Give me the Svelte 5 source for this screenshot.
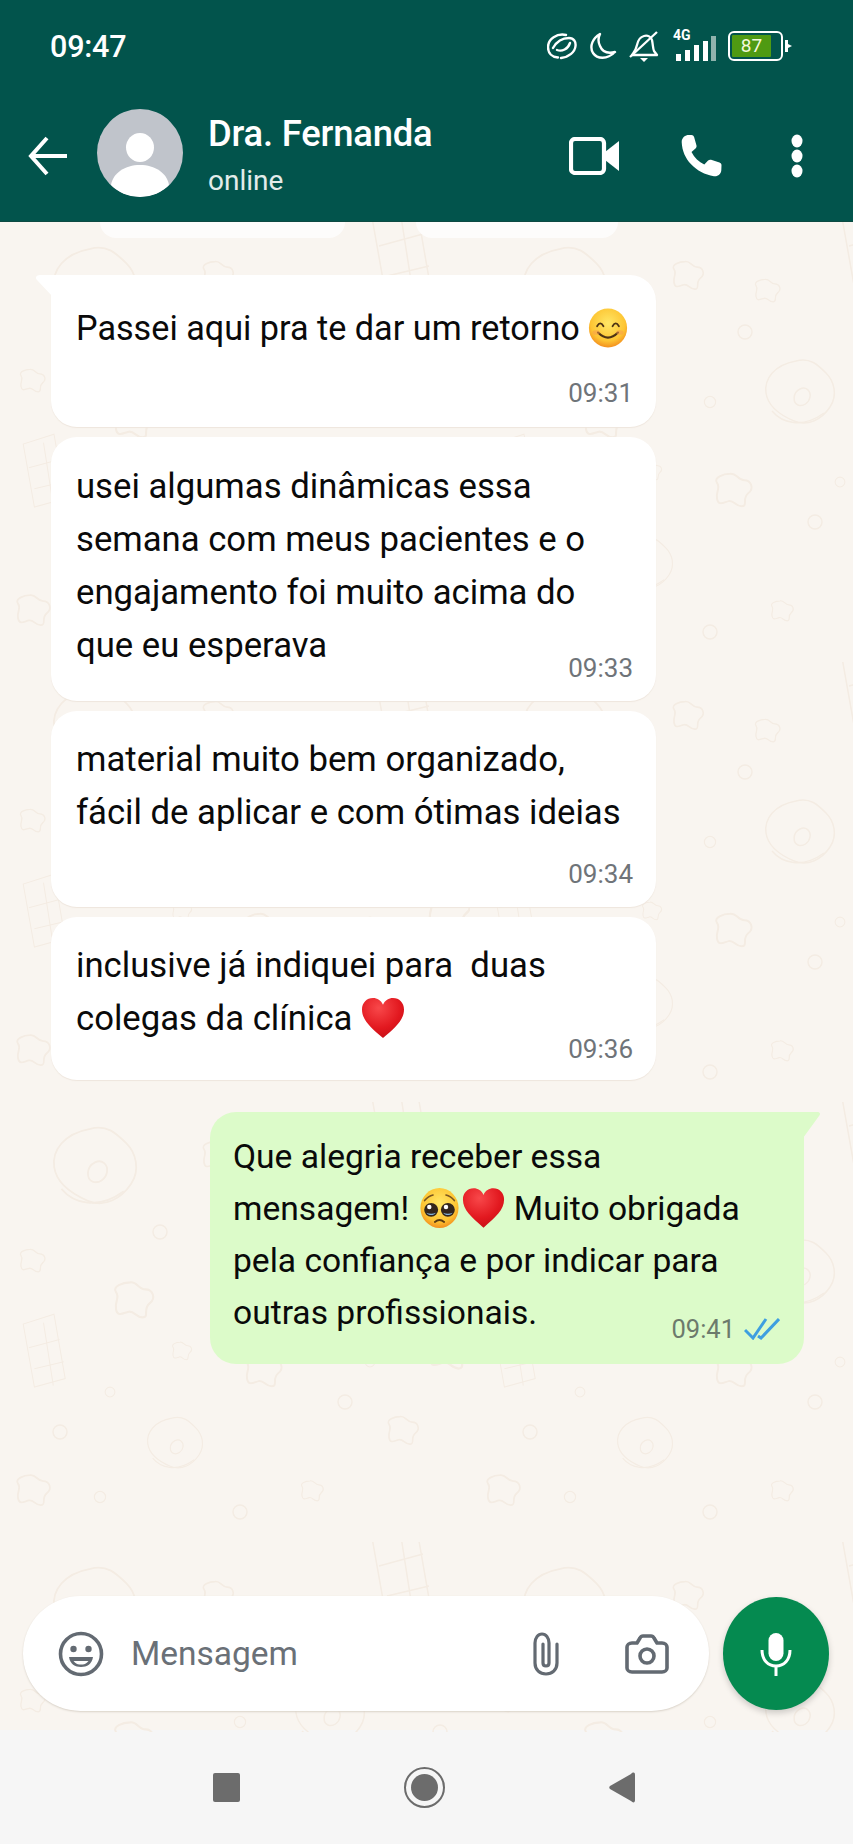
<script>
  // wallpaper tile, placed by hand so it stays faint and busy like the original
  const blob = 'M0-14c5-1 6 5 11 5s8 6 3 10 0 10-5 10-6-5-10-4-8 4-9-2 3-8 0-12 5-7 10-7z';
  const tile = [
    { kind: 'donut', x: 95, y: 70, s: 1.2 },
    { kind: 'donut', x: 330, y: 175, s: 1 },
    { kind: 'donut', x: 175, y: 345, s: 0.8 },
    { kind: 'grid', x: 395, y: 30, s: 1 },
    { kind: 'grid', x: 40, y: 250, s: 0.7 },
    { kind: 'star', x: 215, y: 55, s: 1.1 },
    { kind: 'star', x: 30, y: 160, s: 0.9 },
    { kind: 'star', x: 260, y: 270, s: 1.3 },
    { kind: 'star', x: 400, y: 330, s: 1.1 },
    { kind: 'star', x: 130, y: 200, s: 1.4 },
    { kind: 'star', x: 310, y: 390, s: 0.8 },
    { kind: 'star', x: 30, y: 390, s: 1.2 },
    { kind: 'star', x: 180, y: 250, s: 0.7 },
    { kind: 'star', x: 445, y: 250, s: 1.5 },
    { kind: 'star', x: 295, y: 70, s: 0.9 },
    { kind: 'dot', x: 160, y: 130, s: 1 },
    { kind: 'dot', x: 275, y: 110, s: 1 },
    { kind: 'dot', x: 240, y: 180, s: 0.8 },
    { kind: 'dot', x: 60, y: 330, s: 1 },
    { kind: 'dot', x: 345, y: 300, s: 1 },
    { kind: 'dot', x: 100, y: 395, s: 0.8 },
    { kind: 'dot', x: 440, y: 190, s: 1 },
    { kind: 'dot', x: 420, y: 120, s: 0.7 },
    { kind: 'dot', x: 240, y: 410, s: 1 },
    { kind: 'dot', x: 110, y: 290, s: 0.7 },
    { kind: 'dot', x: 370, y: 260, s: 0.7 }
  ];
</script>

<div class="phone">
  <header class="top">
    <div class="status">
      <span class="clock">09:47</span>
      <div class="status-icons">
        <svg width="30" height="27" viewBox="0 0 30 27" fill="none" stroke="#fff" stroke-width="2.400" stroke-linecap="round">
          <path d="M19 2C10 0 1 6 1 14c0 6 4 10 10 10.500" />
          <path d="M6 15c4-7 10-10 16-10 5 0 7 4 6.500 8-.5 6-6.500 11-14.500 12" />
          <path d="M10 17c5 2 11-1 13-7" />
        </svg>
        <svg width="28" height="28" viewBox="0 0 28 28" fill="none" stroke="#fff" stroke-width="2.400" stroke-linejoin="round">
          <path d="M11 2C4 6 0 14 4 21c4 6 14 7 22-1-8 2-13-1-15-6-2-4-2-8 0-12z" />
        </svg>
        <svg width="30" height="31" viewBox="0 0 30 31" fill="none" stroke="#fff" stroke-width="2.300" stroke-linejoin="round">
          <path d="M3 24c2-3 4-5 5-10 1-5 3-8 7-9 4-1 7 1 8 4 1 5 1 9 2 11l3 4z" />
          <path d="M1 26L28 1" />
          <path d="M11 27h8l-4 4z" fill="#fff" stroke="none" />
        </svg>
        <div class="signal">
          <span class="tag">4G</span>
          <svg width="40" height="25" viewBox="0 0 40 25" fill="#fff">
            <rect x="0" y="18" width="5" height="7" />
            <rect x="9" y="14" width="5" height="11" />
            <rect x="18" y="9" width="5" height="16" />
            <rect x="27" y="5" width="5" height="20" />
            <rect x="35" y="0" width="5" height="25" fill="#8fb3ad" />
          </svg>
        </div>
        <div class="battery">
          <div class="cell"><span class="level">87</span></div>
          <svg class="charge" width="7" height="14" viewBox="0 0 7 14" fill="#fff"><path d="M0 1h3v4l4 2-4 2v4H0z" /></svg>
        </div>
      </div>
    </div>
    <div class="appbar">
      <svg class="back" width="42" height="40" viewBox="0 0 42 40" fill="none" stroke="#fff" stroke-width="4">
        <path d="M41 20H6M21 2L5 20l16 18" />
      </svg>
      <div class="avatar">
        <svg width="86" height="88" viewBox="0 0 86 88">
          <ellipse cx="43" cy="38.500" rx="14" ry="14.500" fill="#fff" />
          <path d="M14 76c2-12 14-20 29-20s27 8 29 20c-7 8-18 12-29 12s-22-4-29-12z" fill="#fff" />
        </svg>
      </div>
      <div class="who">
        <div class="name">Dra. Fernanda</div>
        <div class="presence">online</div>
      </div>
      <div class="actions">
        <svg class="video" width="50" height="38" viewBox="0 0 50 38" fill="none" stroke="#fff" stroke-width="4.200" stroke-linejoin="round">
          <rect x="2" y="2" width="33" height="34" rx="4" />
          <path d="M36 15l14-11v30L36 23z" fill="#fff" stroke="none" />
        </svg>
        <svg class="call" width="43" height="42" viewBox="3 1.400 20 21" fill="#fff">
          <path d="M6.600 1.400c-1.600 0-3.600 1.300-3.500 3.600.2 4.200 1.800 8 4.700 11 3 3.200 6.800 5.200 11.400 6 2 .3 3.700-1.400 3.700-3l.1-2.500c0-.7-.4-1.200-1-1.400l-4.200-1.300c-.6-.2-1.100 0-1.500.4l-1.900 2c-2.700-1.300-5-3.500-6.400-6.300l2-1.800c.5-.4.600-1 .5-1.500L9.300 2.400c-.2-.6-.7-1-1.300-1z" />
        </svg>
        <svg width="12" height="44" viewBox="0 0 12 44" fill="#fff">
          <ellipse cx="6" cy="7" rx="5.500" ry="6.500" />
          <ellipse cx="6" cy="22" rx="5.500" ry="6.500" />
          <ellipse cx="6" cy="37" rx="5.500" ry="6.500" />
        </svg>
      </div>
    </div>
  </header>

  <main class="chat">
    <svg class="wallpaper" width="853" height="1510" aria-hidden="true">
      <defs>
        <pattern id="doodle" width="470" height="440" patternUnits="userSpaceOnUse">
          {#each tile as t}
            <g transform="translate({t.x} {t.y}) scale({t.s})" fill="none" stroke="#f4ece3" stroke-width="1.500">
              {#if t.kind === 'donut'}
                <path d="M-4-36c14-4 22 4 30 12s12 22 4 34-22 20-36 14-26-14-28-28 8-28 30-32z" />
                <path d="M0-8c6-3 11 2 10 8S3 10-2 8-8-4 0-8z" />
                <path d="M-28 14c10 12 30 18 52 2" />
              {:else if t.kind === 'grid'}
                <path d="M-24-40l16 90 44-12-16-92zM-16 -6l44-12M-8 24l42-10M5-42l14 90" />
              {:else if t.kind === 'star'}
                <path d={blob} />
              {:else}
                <circle r="7" />
              {/if}
            </g>
          {/each}
        </pattern>
      </defs>
      <rect width="853" height="1510" fill="url(#doodle)" />
    </svg>

    <div class="clipped">
      <span class="stub one"></span>
      <span class="stub two"></span>
    </div>

    <div class="thread">
      <div class="bubble in first">
        <svg class="tail" width="18" height="22" viewBox="0 0 18 22"><path d="M18 0H5C1 0 0 3 2 5l16 17z" fill="#fff" /></svg>
        <p class="text">Passei aqui pra te dar um retorno
          <svg class="emoji" width="40" height="42" viewBox="0 0 44 44">
            <defs>
              <radialGradient id="face" cx="50%" cy="38%" r="64%">
                <stop offset="0" stop-color="#ffe766" /><stop offset=".7" stop-color="#fdc533" /><stop offset="1" stop-color="#f2891c" />
              </radialGradient>
              <radialGradient id="red" cx="40%" cy="25%" r="85%">
                <stop offset="0" stop-color="#f8484a" /><stop offset=".6" stop-color="#e2181f" /><stop offset="1" stop-color="#c00c14" />
              </radialGradient>
            </defs>
            <ellipse cx="22" cy="22" rx="21" ry="21.500" fill="url(#face)" />
            <path d="M10 20q3.500-6 7 0M27 20q3.500-6 7 0" fill="none" stroke="#4d3314" stroke-width="2" stroke-linecap="round" />
            <path d="M11 27q11 11 22 0" fill="none" stroke="#4d3314" stroke-width="2.400" stroke-linecap="round" />
            <ellipse cx="9" cy="27" rx="4" ry="2.500" fill="#f89a4e" opacity=".5" />
            <ellipse cx="35" cy="27" rx="4" ry="2.500" fill="#f89a4e" opacity=".5" />
          </svg>
        </p>
        <div class="time"><span>09:31</span></div>
      </div>

      <div class="bubble in second">
        <p class="text">usei algumas dinâmicas essa<br />semana com meus pacientes e o<br />engajamento foi muito acima do<br />que eu esperava</p>
        <div class="time"><span>09:33</span></div>
      </div>

      <div class="bubble in third">
        <p class="text">material muito bem organizado,<br />fácil de aplicar e com ótimas ideias</p>
        <div class="time"><span>09:34</span></div>
      </div>

      <div class="bubble in fourth">
        <p class="text">inclusive já indiquei para&nbsp; duas<br />colegas da clínica
          <svg class="emoji" width="44" height="42" viewBox="0 0 46 44">
            <path d="M23 43C10 32 1 24 1 13 1 6 6 1 12.500 1 17 1 21 3.500 23 8c2-4.500 6-7 10.500-7C40 1 45 6 45 13c0 11-9 19-22 30z" fill="url(#red)" />
          </svg>
        </p>
        <div class="time"><span>09:36</span></div>
      </div>

      <div class="bubble out">
        <svg class="tail" width="18" height="26" viewBox="0 0 18 26"><path d="M0 0h14c3 0 4 2 2 4L0 26z" fill="#dcfbc9" /></svg>
        <p class="text">Que alegria receber essa<br />mensagem!
          <svg class="emoji pleading" width="39" height="42" viewBox="0 0 42 44">
            <ellipse cx="21" cy="22" rx="20.500" ry="21.500" fill="url(#face)" />
            <path d="M5 14q4-5 9-6M28 8q5 1 9 6" fill="none" stroke="#7a5520" stroke-width="1.800" stroke-linecap="round" />
            <circle cx="12" cy="24" r="7.500" fill="#33261c" />
            <circle cx="30" cy="24" r="7.500" fill="#33261c" />
            <path d="M7 27c2 3.500 8 3.500 10 0-3 1.500-7 1.500-10 0zM25 27c2 3.500 8 3.500 10 0-3 1.500-7 1.500-10 0z" fill="#7fb0d8" />
            <circle cx="10" cy="21" r="2.400" fill="#fff" />
            <circle cx="28" cy="21" r="2.400" fill="#fff" />
            <path d="M16 37q5-4 10 0" fill="none" stroke="#5b3a12" stroke-width="2" stroke-linecap="round" />
          </svg><svg class="emoji beside" width="43" height="42" viewBox="0 0 46 44">
            <path d="M23 43C10 32 1 24 1 13 1 6 6 1 12.500 1 17 1 21 3.500 23 8c2-4.500 6-7 10.500-7C40 1 45 6 45 13c0 11-9 19-22 30z" fill="url(#red)" />
          </svg> Muito obrigada<br />pela confiança e por indicar para<br />outras profissionais.</p>
        <div class="time read">
          <span>09:41</span>
          <svg width="36" height="22" viewBox="0 0 36 22" fill="none" stroke="#3e9fe0" stroke-width="3">
            <path d="M1 12l8 8L22 1M14 18l3 2L35 1" />
          </svg>
        </div>
      </div>
    </div>

    <div class="composer">
      <div class="field">
        <svg width="46" height="46" viewBox="0 0 46 46" fill="none" stroke="#636a72" stroke-width="3.600">
          <circle cx="23" cy="23" r="20.500" />
          <circle cx="15.500" cy="18" r="3.200" fill="#636a72" stroke="none" />
          <circle cx="30.500" cy="18" r="3.200" fill="#636a72" stroke="none" />
          <path d="M11 26h24c-1 7-6 10-12 10s-11-3-12-10z" fill="#636a72" stroke="none" />
          <path d="M15.500 30h15c-2 3-5 3.500-7.500 3.500s-5.500-.5-7.500-3.500z" fill="#fff" stroke="none" />
        </svg>
        <span class="placeholder">Mensagem</span>
        <svg class="clip" width="28" height="44" viewBox="0 0 28 44" fill="none" stroke="#636a72" stroke-width="3.200" stroke-linecap="round">
          <path d="M25 12v19c0 7-5 11-11 11S3 38 3 31V11c0-5 3-9 7-9s7 4 7 9v20c0 2-1 3-3 3s-3-1-3-3V12" />
        </svg>
        <svg width="46" height="42" viewBox="0 0 46 42" fill="none" stroke="#636a72" stroke-width="3.600" stroke-linejoin="round">
          <path d="M8 10h5l3-5c.5-1 1-2 3-2h8c2 0 2.500 1 3 2l3 5h5c3 0 5 2 5 4v21c0 2-2 4-5 4H8c-3 0-5-2-5-4V14c0-2 2-4 5-4z" />
          <circle cx="23" cy="23" r="7" />
        </svg>
      </div>
      <div class="mic">
        <svg width="32" height="44" viewBox="0 0 32 44" fill="#fff">
          <rect x="8.500" y="1" width="15" height="28" rx="7.500" />
          <path d="M2 18c0 10 6 16 14 16s14-6 14-16" fill="none" stroke="#fff" stroke-width="3" />
          <rect x="14.500" y="33" width="3" height="11" />
        </svg>
      </div>
    </div>
  </main>

  <nav class="softkeys">
    <span class="square"></span>
    <span class="home"><span></span></span>
    <svg width="26" height="31" viewBox="0 0 26 31"><path d="M26 3c0-3-2-3-4-1L1 14c-1 1-1 2 0 3l21 12c2 2 4 2 4-1z" fill="#6c6c6c" /></svg>
  </nav>
</div>

<style>
  :global(body) {
    margin: 0;
    background: #f9f5f0;
  }

  .phone {
    width: 853px;
    height: 1844px;
    display: flex;
    flex-direction: column;
    overflow: hidden;
    font-family: Roboto, "Noto Sans", sans-serif;
  }

  .top {
    height: 222px;
    flex: none;
    background: #02544c;
    border-bottom: 1px solid #0d4a42;
    box-sizing: border-box;
    color: #fff;
  }

  .status {
    height: 92px;
    padding-left: 50px;
    box-sizing: border-box;
    display: flex;
    align-items: center;
    justify-content: space-between;
  }

  .clock {
    font-size: 30.500px;
    font-weight: 500;
    letter-spacing: -0.2px;
  }

  .status-icons {
    display: flex;
    align-items: center;
    gap: 12px;
    padding-right: 61px;
  }

  .signal {
    position: relative;
    width: 40px;
    height: 30px;
    display: flex;
    align-items: flex-end;
    margin-left: 5px;
  }

  .tag {
    position: absolute;
    left: -3px;
    top: -3px;
    font-size: 14px;
    font-weight: 700;
    line-height: 14px;
  }

  .battery {
    display: flex;
    align-items: center;
    gap: 2px;
  }

  .cell {
    width: 47px;
    height: 22px;
    border: 2.5px solid #fff;
    border-radius: 6px;
    padding: 2px;
    box-sizing: content-box;
  }

  .level {
    display: block;
    width: 39px;
    height: 22px;
    background: #4f9a12;
    color: #f4f9dc;
    font-size: 19px;
    line-height: 22px;
    text-align: center;
    border-radius: 1px;
  }

  .appbar {
    height: 129px;
    display: flex;
    align-items: center;
    padding: 0 0 7px 26px;
    box-sizing: border-box;
  }

  .back {
    flex: none;
    margin: 6px 29px 0 0;
  }

  .avatar {
    flex: none;
    width: 86px;
    height: 88px;
    border-radius: 50%;
    overflow: hidden;
    background: #c0c4cb;
    margin-right: 25px;
  }

  .avatar svg {
    display: block;
  }

  .who {
    flex: 1;
    padding-top: 5px;
  }

  .name {
    font-size: 36.400px;
    font-weight: 500;
    line-height: 42px;
    letter-spacing: -0.2px;
  }

  .presence {
    font-size: 28px;
    line-height: 34px;
    margin-top: 9px;
    color: #e3ecea;
  }

  .actions {
    display: flex;
    align-items: center;
    gap: 68px;
    padding-right: 50px;
    margin-top: 6px;
  }

  .call {
    margin-left: -7px;
  }

  .chat {
    position: relative;
    flex: 1;
    display: flex;
    flex-direction: column;
    min-height: 0;
    background: #f9f5f0;
  }

  .wallpaper {
    position: absolute;
    left: 0;
    top: 0;
  }

  .clipped {
    position: absolute;
    top: 0;
    left: 0;
    width: 100%;
    height: 18px;
    overflow: hidden;
  }

  .stub {
    position: absolute;
    top: -30px;
    height: 46px;
    background: #fdfcfb;
    border-radius: 16px;
  }

  .stub.one {
    left: 100px;
    width: 245px;
  }

  .stub.two {
    left: 416px;
    width: 202px;
  }

  .thread {
    position: relative;
    flex: 1;
    display: flex;
    flex-direction: column;
    padding: 53px 0 0 51px;
    min-height: 0;
  }

  .bubble {
    position: relative;
    box-sizing: border-box;
    border-radius: 26px;
    margin-bottom: 10px;
  }

  .bubble.in {
    width: 605px;
    padding: 0 24px 0 25px;
    background: #fff;
    box-shadow: 0 1px 1px #eee6dd;
  }

  .bubble.first {
    height: 152px;
    padding-top: 27px;
    border-top-left-radius: 0;
  }

  .bubble.first .tail {
    position: absolute;
    left: -16px;
    top: 0;
  }

  .bubble.first .text {
    font-size: 34.200px;
  }

  .bubble.first .time {
    bottom: 19px;
  }

  .bubble.second {
    height: 264px;
    padding-top: 23px;
  }

  .bubble.second .time,
  .bubble.third .time {
    bottom: 18px;
  }

  .bubble.third {
    height: 196px;
    padding-top: 22px;
  }

  .bubble.fourth {
    height: 163px;
    padding-top: 22px;
    margin-bottom: 32px;
  }

  .bubble.out {
    align-self: flex-start;
    margin-left: 159px;
    width: 594px;
    height: 252px;
    padding: 19px 24px 0 23px;
    background: #dcfbc9;
    border-top-right-radius: 0;
  }

  .bubble.out .tail {
    position: absolute;
    right: -17px;
    top: 0;
  }

  .text {
    margin: 0;
    font-size: 34.700px;
    line-height: 53px;
    color: #0a0a0a;
    white-space: nowrap;
  }

  .out .text {
    font-size: 33.600px;
    line-height: 52px;
  }

  .emoji {
    vertical-align: -9px;
  }

  .pleading,
  .beside {
    margin-left: 3px;
  }

  .time {
    position: absolute;
    right: 23px;
    bottom: 16px;
    display: flex;
    align-items: center;
    gap: 9px;
    font-size: 26px;
    line-height: 30px;
    color: #6f7479;
  }

  .time.read {
    color: #6c7a6c;
    font-size: 25.500px;
    right: 24px;
    bottom: 20px;
  }

  .composer {
    position: relative;
    flex: none;
    height: 115px;
    display: flex;
    align-items: center;
    gap: 14px;
    padding: 0 24px 19px 23px;
  }

  .field {
    flex: 1;
    height: 115px;
    box-sizing: border-box;
    background: #fff;
    border-radius: 58px;
    box-shadow: 0 1px 2px #d9d2c8;
    display: flex;
    align-items: center;
    padding: 0 39px 0 35px;
  }

  .placeholder {
    flex: 1;
    margin-left: 27px;
    font-size: 33.500px;
    color: #6a7077;
  }

  .clip {
    margin-right: 64px;
  }

  .mic {
    flex: none;
    width: 106px;
    height: 113px;
    border-radius: 50%;
    background: #058a50;
    box-shadow: 0 3px 6px rgba(0, 0, 0, 0.18);
    display: flex;
    align-items: center;
    justify-content: center;
  }

  .softkeys {
    flex: none;
    height: 114px;
    background: #f6f6f6;
    display: flex;
    align-items: center;
    gap: 164px;
    padding-left: 213px;
    box-sizing: border-box;
  }

  .square {
    width: 27px;
    height: 29px;
    background: #6c6c6c;
    border-radius: 2px;
  }

  .home {
    width: 41px;
    height: 41px;
    flex: none;
    box-sizing: border-box;
    border: 2.500px solid #6c6c6c;
    border-radius: 50%;
    display: flex;
    align-items: center;
    justify-content: center;
  }

  .home span {
    width: 27px;
    height: 27px;
    background: #6c6c6c;
    border-radius: 50%;
  }
</style>
